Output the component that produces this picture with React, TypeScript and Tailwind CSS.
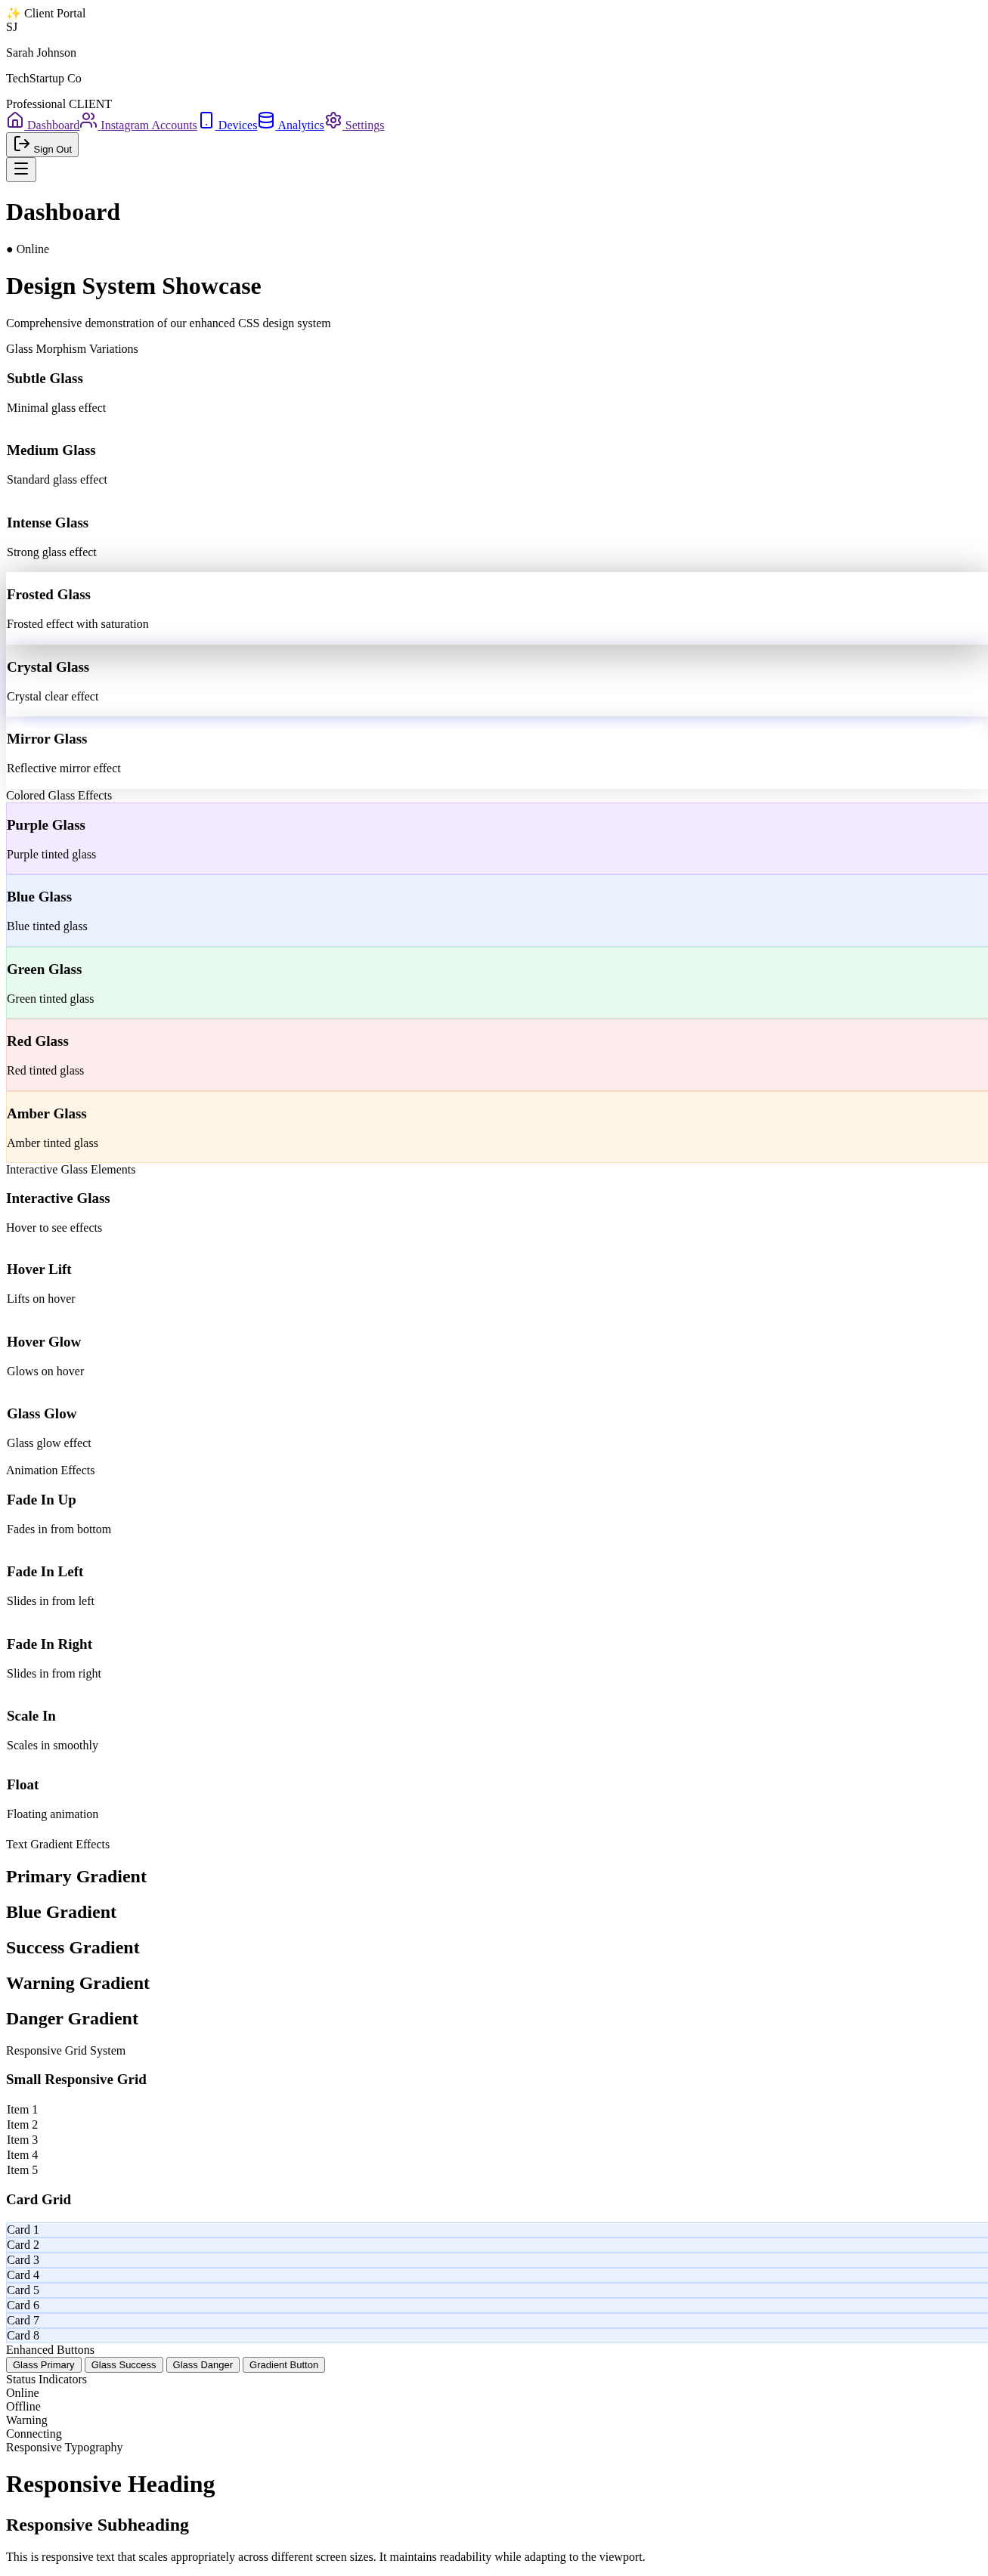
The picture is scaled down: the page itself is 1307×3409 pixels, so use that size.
import type { ReactNode } from "react";
import { Database, House, LogOut, Menu, Settings, Smartphone, Users, type LucideIcon } from "lucide-react";

const navItems: { label: string; Icon: LucideIcon; visited: boolean }[] = [
  { label: "Dashboard", Icon: House, visited: true },
  { label: "Instagram Accounts", Icon: Users, visited: true },
  { label: "Devices", Icon: Smartphone, visited: false },
  { label: "Analytics", Icon: Database, visited: false },
  { label: "Settings", Icon: Settings, visited: true },
];

type CardData = { title: string; text: string; look?: string };

const plain = "border border-r-0 border-transparent";

const glassCards: CardData[] = [
  { title: "Subtle Glass", text: "Minimal glass effect" },
  { title: "Medium Glass", text: "Standard glass effect" },
  { title: "Intense Glass", text: "Strong glass effect" },
  {
    title: "Frosted Glass",
    text: "Frosted effect with saturation",
    look: "border border-r-0 border-white/20 shadow-[0_8px_50px_rgba(0,0,0,0.35)]",
  },
  {
    title: "Crystal Glass",
    text: "Crystal clear effect",
    look: "border border-r-0 border-white/20 backdrop-blur-[8px] shadow-[0_8px_32px_rgba(31,38,135,0.37)]",
  },
  {
    title: "Mirror Glass",
    text: "Reflective mirror effect",
    look: "border border-r-0 border-white/20 backdrop-blur-[8px] backdrop-brightness-110 shadow-[0_4px_30px_rgba(0,0,0,0.1)]",
  },
];

const blueGlass = "border border-r-0 border-[#3b82f6]/20 bg-[#3b82f6]/10";

const coloredCards: CardData[] = [
  { title: "Purple Glass", text: "Purple tinted glass", look: "border border-r-0 border-[#9333ea]/20 bg-[#9333ea]/10 backdrop-blur-[16px]" },
  { title: "Blue Glass", text: "Blue tinted glass", look: blueGlass },
  { title: "Green Glass", text: "Green tinted glass", look: "border border-r-0 border-[#22c55e]/20 bg-[#22c55e]/10" },
  { title: "Red Glass", text: "Red tinted glass", look: "border border-r-0 border-[#ef4444]/20 bg-[#ef4444]/10" },
  { title: "Amber Glass", text: "Amber tinted glass", look: "border border-r-0 border-[#f59e0b]/20 bg-[#f59e0b]/10" },
];

const interactiveCards: CardData[] = [
  { title: "Interactive Glass", text: "Hover to see effects", look: "flow-root" },
  { title: "Hover Lift", text: "Lifts on hover" },
  { title: "Hover Glow", text: "Glows on hover" },
  { title: "Glass Glow", text: "Glass glow effect" },
];

const animationCards: CardData[] = [
  { title: "Fade In Up", text: "Fades in from bottom" },
  { title: "Fade In Left", text: "Slides in from left" },
  { title: "Fade In Right", text: "Slides in from right" },
  { title: "Scale In", text: "Scales in smoothly" },
  { title: "Float", text: "Floating animation", look: "border border-r-0 border-transparent -translate-y-[5px]" },
];

const gradients = ["Primary", "Blue", "Success", "Warning", "Danger"];
const statuses = ["Online", "Offline", "Warning", "Connecting"];

function Heading({ children }: { children: ReactNode }) {
  return <h3 className="mt-[18px] mb-[19px] text-[19px] leading-[22px] font-bold">{children}</h3>;
}

function Cards({ items }: { items: CardData[] }) {
  return (
    <div>
      {items.map(({ title, text, look = plain }) => (
        <div key={title} className={`even:pb-px ${look}`}>
          <Heading>{title}</Heading>
          <p className="mb-4">{text}</p>
        </div>
      ))}
    </div>
  );
}

function Title({ children }: { children: ReactNode }) {
  return <h1 className="mt-[21px] mb-[22px] text-[32px] leading-[37px] font-bold">{children}</h1>;
}

function Subtitle({ children }: { children: ReactNode }) {
  return <h2 className="my-5 text-2xl leading-[27px] font-bold">{children}</h2>;
}

function Button({ children, label }: { children: ReactNode; label?: string }) {
  return (
    <button
      type="button"
      aria-label={label}
      className="rounded-[3px] border border-[#767676] bg-[#efefef] px-2 py-[2px] font-['Liberation_Sans',Arial,sans-serif] text-[13px] leading-[15px]"
    >
      {children}
    </button>
  );
}

export default function App() {
  return (
    <div className="flow-root bg-white pt-2 pl-2 font-['Liberation_Serif','Times_New_Roman',serif] text-base leading-[18px] text-black">
      <aside>
        <div className="leading-[19px]">✨ Client Portal</div>
        <div>SJ</div>
        <p className="my-4">Sarah Johnson</p>
        <p className="my-4">TechStartup Co</p>
        <div>Professional CLIENT</div>
        <nav>
          {navItems.map(({ label, Icon, visited }) => (
            <a key={label} href="#" className={visited ? "text-[#551a8b] underline" : "text-[#0000ee] underline"}>
              <Icon className="inline align-baseline" size={24} /> {label}
            </a>
          ))}
        </nav>
        <div className="flex">
          <Button>
            <LogOut className="inline align-baseline" size={24} /> Sign Out
          </Button>
        </div>
      </aside>

      <header>
        <div className="flex">
          <Button label="Open menu">
            <Menu className="-mx-px inline align-baseline" size={24} />
          </Button>
        </div>
        <Title>Dashboard</Title>
        <div>● Online</div>
      </header>

      <main>
        <Title>Design System Showcase</Title>
        <p className="my-4">Comprehensive demonstration of our enhanced CSS design system</p>

        <div>Glass Morphism Variations</div>
        <Cards items={glassCards} />

        <div>Colored Glass Effects</div>
        <Cards items={coloredCards} />

        <div>Interactive Glass Elements</div>
        <Cards items={interactiveCards} />

        <div>Animation Effects</div>
        <Cards items={animationCards} />

        <div>Text Gradient Effects</div>
        {gradients.map((name) => (
          <Subtitle key={name}>{name} Gradient</Subtitle>
        ))}

        <div>Responsive Grid System</div>
        <Heading>Small Responsive Grid</Heading>
        {[1, 2, 3, 4, 5].map((n) => (
          <div key={n} className={plain}>
            Item {n}
          </div>
        ))}
        <Heading>Card Grid</Heading>
        {[1, 2, 3, 4, 5, 6, 7, 8].map((n) => (
          <div key={n} className={blueGlass}>
            Card {n}
          </div>
        ))}

        <div>Enhanced Buttons</div>
        <div className="flex flex-wrap gap-1">
          <Button>Glass Primary</Button>
          <Button>Glass Success</Button>
          <Button>Glass Danger</Button>
          <Button>Gradient Button</Button>
        </div>

        <div>Status Indicators</div>
        {statuses.map((status) => (
          <div key={status}>{status}</div>
        ))}

        <div>Responsive Typography</div>
        <Title>Responsive Heading</Title>
        <Subtitle>Responsive Subheading</Subtitle>
        <p className="my-4">
          This is responsive text that scales appropriately across different screen sizes. It maintains readability
          while adapting to the viewport.
        </p>
      </main>
    </div>
  );
}
